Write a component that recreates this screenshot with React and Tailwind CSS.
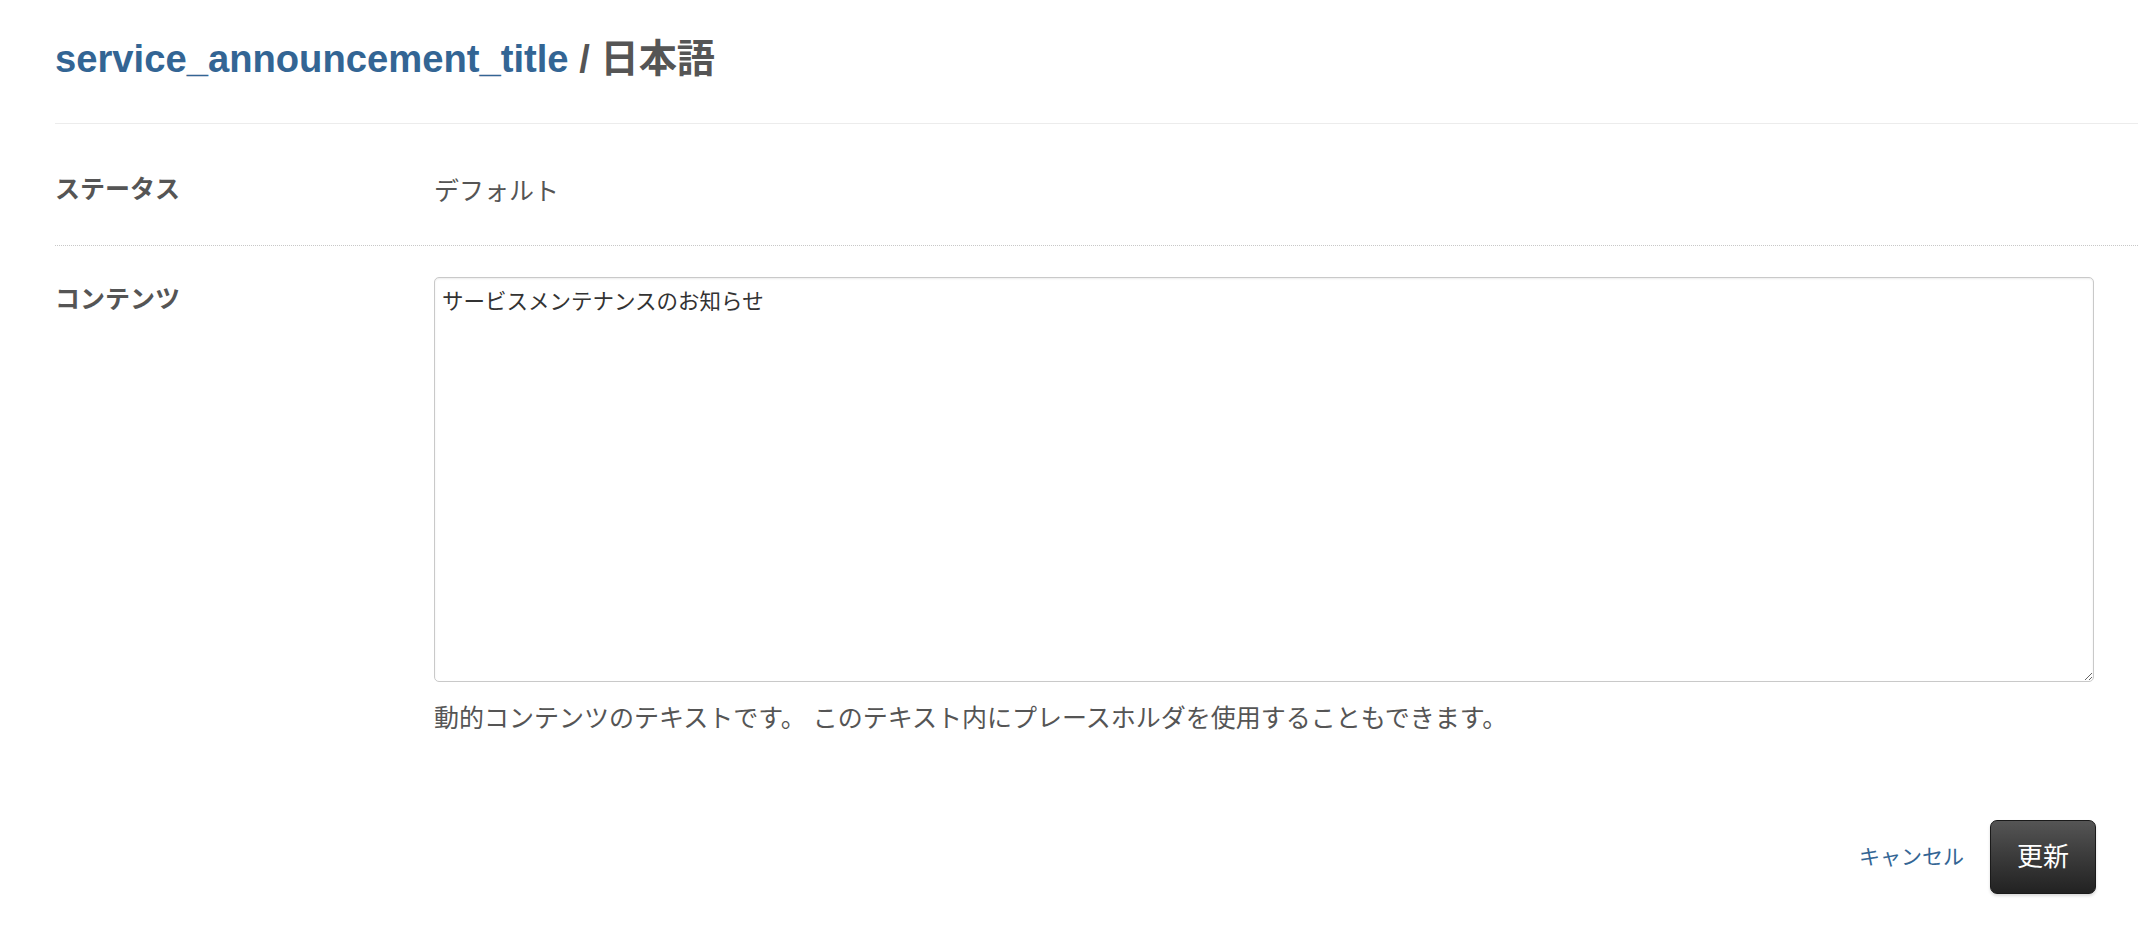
import React from "react";

const jp = "font-['Liberation_Sans','Noto_Sans_CJK_JP',sans-serif]";

export default function App() {
  return (
    <div className={`w-[2138px] h-[932px] bg-white pl-[55px] ${jp}`}>
      <div className="h-[124px] pt-[38px] border-b border-[#ececec]">
        <h1 className="text-[38.2px] leading-[42px] font-bold text-[#555555] whitespace-nowrap">
          <span className="text-[#336594]">service_announcement_title</span>
          <span> / 日本語</span>
        </h1>
      </div>

      <div className="h-[122px] flex border-b border-dotted border-[#c8c8c8]">
        <div className="w-[379px] pt-[49px] text-[25px] leading-[32px] font-bold text-[#555555]">
          ステータス
        </div>
        <div className="pt-[51px] text-[25px] leading-[32px] text-[#555555]">
          デフォルト
        </div>
      </div>

      <div className="flex pt-[31px]">
        <div className="w-[379px] pt-[6px] text-[25px] leading-[32px] font-bold text-[#555555] shrink-0">
          コンテンツ
        </div>
        <div className="flex-1 pr-[44px]">
          <textarea
            className={`block w-[1660px] h-[405px] border border-[#c9c9c9] rounded-[5px] pt-[9px] pl-[7px] text-[21.5px] leading-[30px] text-[#333333] shadow-[inset_0_1px_2px_rgba(0,0,0,0.08)] outline-none ${jp}`}
            defaultValue="サービスメンテナンスのお知らせ"
          />
          <p className="mt-[20px] text-[25px] leading-[32px] text-[#555555]">
            動的コンテンツのテキストです。 このテキスト内にプレースホルダを使用することもできます。
          </p>
          <div className="mt-[86px] flex items-center justify-end gap-[26px] mr-[-2px]">
            <a className="text-[21px] leading-[30px] text-[#336594] cursor-pointer">キャンセル</a>
            <button
              className={`w-[106px] h-[74px] rounded-[7px] border border-[#1a1a1a] bg-gradient-to-b from-[#555555] to-[#222222] text-white text-[26px] leading-[30px] shadow-[0_2px_3px_rgba(0,0,0,0.15)] ${jp}`}
            >
              更新
            </button>
          </div>
        </div>
      </div>
    </div>
  );
}
